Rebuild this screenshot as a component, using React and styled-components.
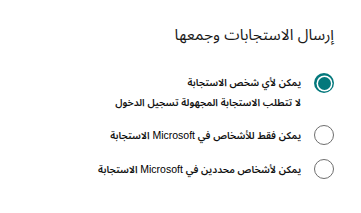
import React from "react";
import styled, { createGlobalStyle } from "styled-components";

const Global = createGlobalStyle`
  html, body { margin: 0; padding: 0; background: #fff; }
  body { font-family: "Liberation Sans", "Noto Sans Arabic", "DejaVu Sans", sans-serif; }
`;

const Panel = styled.div`
  direction: rtl;
  width: 361px;
  height: 213px;
  box-sizing: border-box;
  padding: 23px 27px 0 0;
  color: #000;
`;

const Title = styled.h2`
  margin: 0 0 26px 0;
  font-size: 15.5px;
  font-weight: 400;
  line-height: 24px;
  color: #1a1a1a;
`;

const Options = styled.div`
  display: flex;
  flex-direction: column;
  gap: 14px;
`;

const Option = styled.label`
  display: flex;
  align-items: flex-start;
  gap: 13px;
  cursor: pointer;
`;

const Circle = styled.span`
  flex: none;
  width: 20px;
  height: 20px;
  box-sizing: border-box;
  border-radius: 50%;
  border: ${(p) => (p.$checked ? "none" : "1px solid #6e6e6e")};
  background: ${(p) => (p.$checked ? "#03787c" : "#fff")};
  display: flex;
  align-items: center;
  justify-content: center;
  &::after {
    content: "";
    display: ${(p) => (p.$checked ? "block" : "none")};
    width: 13px;
    height: 13px;
    border-radius: 50%;
    background: #03787c;
    box-shadow: 0 0 0 1.5px #fff;
  }
`;

const Texts = styled.div`
  display: flex;
  flex-direction: column;
  gap: 4px;
  padding-top: 2px;
`;

const Label = styled.span`
  font-size: 10px;
  line-height: 16px;
  font-weight: 600;
  color: #111;
`;

const Latin = styled.span`
  font-size: 10.5px;
  font-weight: 400;
  color: #000;
`;

const withBrand = (text) => {
  const parts = text.split("Microsoft");
  if (parts.length === 1) return text;
  return (
    <>
      {parts[0]}
      <Latin>Microsoft</Latin>
      {parts[1]}
    </>
  );
};

const options = [
  { label: "يمكن لأي شخص الاستجابة", hint: "لا تتطلب الاستجابة المجهولة تسجيل الدخول", checked: true },
  { label: "يمكن فقط للأشخاص في Microsoft الاستجابة" },
  { label: "يمكن لأشخاص محددين في Microsoft الاستجابة" },
];

export default function App() {
  return (
    <>
      <Global />
      <Panel>
        <Title>إرسال الاستجابات وجمعها</Title>
        <Options>
          {options.map((o, i) => (
            <Option key={i}>
              <Circle $checked={o.checked} />
              <Texts>
                <Label>{withBrand(o.label)}</Label>
                {o.hint && <Label>{o.hint}</Label>}
              </Texts>
            </Option>
          ))}
        </Options>
      </Panel>
    </>
  );
}
